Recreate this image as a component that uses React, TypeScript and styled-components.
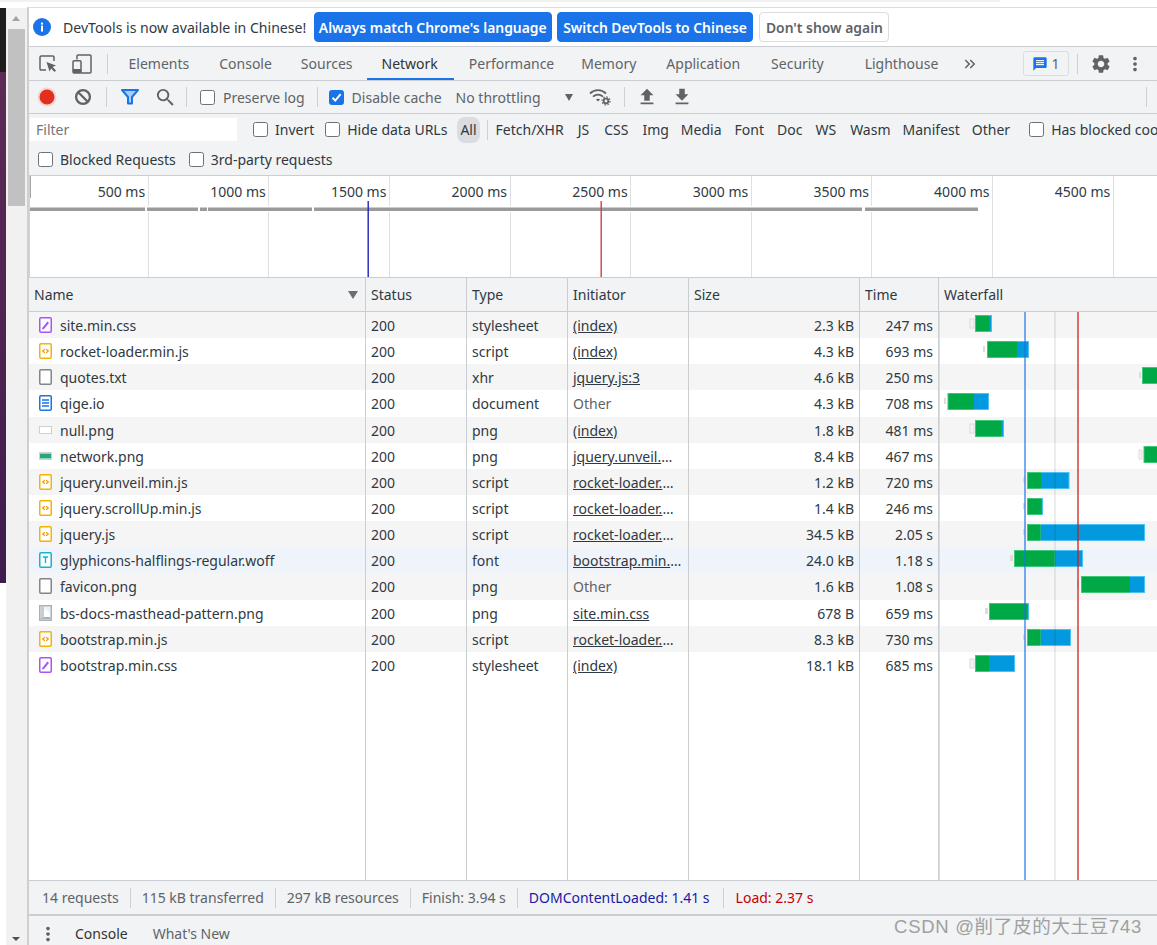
import React from "react";
import styled, { createGlobalStyle } from "styled-components";
import { MdSettings, MdMoreVert, MdSearch, MdMessage, MdFileUpload, MdFileDownload, MdKeyboardDoubleArrowRight } from "react-icons/md";

const Global = createGlobalStyle`
  html, body { margin: 0; padding: 0; background: #fff; }
  body { font-family: "Noto Sans", "Open Sans", sans-serif; font-size: 14px; color: #303942; }
  * { box-sizing: border-box; }
`;

const Page = styled.div`width: 1157px; height: 945px; overflow: hidden; display: flex; flex-direction: column; position: relative; background: #fff;`;
const TopStrip = styled.div`height: 7px; flex: none;`;
const TopHighlight = styled.div`width: 1000px; height: 2px; background: #f1f1f1; border-radius: 0 0 6px 0;`;
const Main = styled.div`flex: 1; min-height: 0; display: flex;`;
const Wallpaper = styled.div`
  width: 6px; flex: none; margin-top: 1px; height: 575px;
  background: linear-gradient(#1d1d1d 0, #1d1d1d 64px, #5e2a56 64px, #3e1c4d 100%);
`;
const ScrollBar = styled.div`
  width: 21px; flex: none; margin-top: 1px; background: #f1f1f1; display: flex; flex-direction: column; align-items: center; padding-top: 21px; position: relative;
`;
const ScrollThumb = styled.div`width: 17px; height: 177px; background: #c1c1c1;`;
const ScrollArrow = styled.div<{ $down?: boolean }>`
  position: absolute; left: 6px; ${p => (p.$down ? "bottom: 4px;" : "top: 8px;")}
  width: 0; height: 0; border-left: 4.5px solid transparent; border-right: 4.5px solid transparent;
  ${p => (p.$down ? "border-top: 4px solid #505050;" : "border-bottom: 5px solid #a3a3a3;")}
`;
const DevTools = styled.div`flex: 1; min-width: 0; display: flex; flex-direction: column; border-left: 2px solid #cdcfd2; border-top: 1px solid #dadce0;`;

const InfoBar = styled.div`height: 39px; flex: none; display: flex; align-items: center; background: #fff; border-bottom: 1px solid #cacdd1; padding-left: 4px;`;
const InfoText = styled.span`margin: 0 7.5px 0 12px; color: #303942; font-size: 14.1px;`;
const InfoButton = styled.button<{ $plain?: boolean; $mr: number; $px: number }>`
  height: 30px; padding: 0 ${p => p.$px}px; margin-right: ${p => p.$mr}px; border-radius: 4px; font: 600 13.9px "Noto Sans", sans-serif; white-space: nowrap;
  color: ${p => (p.$plain ? "#5f6368" : "#fff")}; background: ${p => (p.$plain ? "#fff" : "#1a73e8")};
  border: 1px solid ${p => (p.$plain ? "#dadce0" : "#1a73e8")};
`;

const TabBar = styled.div`height: 34px; flex: none; display: flex; align-items: stretch; background: #f1f3f4; border-bottom: 1px solid #cacdd1; color: #5f6368; padding-left: 2px;`;
const TabIcon = styled.div`width: 34px; display: flex; align-items: center; justify-content: center;`;
const VSep = styled.div<{ $ml?: number; $mr?: number; $h?: number }>`
  width: 1px; height: ${p => p.$h ?? 20}px; align-self: center; flex: none; background: #cdcfd2;
  margin-left: ${p => p.$ml ?? 5}px; margin-right: ${p => p.$mr ?? p.$ml ?? 5}px;
`;
const Tab = styled.div<{ $active?: boolean; $extra?: number }>`
  display: flex; align-items: center; padding: 0 ${p => 14.5 + (p.$extra ?? 0)}px 0 14.5px; white-space: nowrap;
  color: ${p => (p.$active ? "#333" : "#5f6368")};
  border-bottom: 2px solid ${p => (p.$active ? "#1a73e8" : "transparent")};
  border-top: 2px solid transparent;
`;
const Spacer = styled.div`flex: 1;`;
const MessageChip = styled.div`
  align-self: center; width: 46px; height: 25px; border: 1px solid #dadce0; border-radius: 3px; display: flex; align-items: center; justify-content: center; gap: 3px; color: #5f6368; margin-right: 8px;
`;
const ToolIcon = styled.div<{ $w?: number; $ml?: number; $c?: string }>`
  width: ${p => p.$w ?? 36}px; margin-left: ${p => p.$ml ?? 0}px; flex: none; display: flex; align-items: center; justify-content: center; color: ${p => p.$c ?? "#5f6368"};
`;

const ToolBar = styled.div`height: 33px; flex: none; display: flex; align-items: center; background: #f1f3f4; border-bottom: 1px solid #cacdd1; color: #5f6368;`;
const CheckLabel = styled.label<{ $ml?: number; $dark?: boolean }>`
  display: flex; align-items: center; gap: ${p => (p.$dark ? 7 : 8)}px; margin-left: ${p => p.$ml ?? 0}px; white-space: nowrap; color: ${p => (p.$dark ? "#303942" : "#5f6368")}; flex: none;
`;
const CheckBox = styled.span<{ $on?: boolean }>`
  width: 15px; height: 15px; flex: none; border-radius: 2.5px; display: flex; align-items: center; justify-content: center;
  border: 1px solid ${p => (p.$on ? "#1a73e8" : "#6e7276")}; background: ${p => (p.$on ? "#1a73e8" : "#fff")};
`;
const Throttle = styled.span`margin-left: 14px; white-space: nowrap; width: 109px; flex: none;`;
const DropTri = styled.span`width: 0; height: 0; border-left: 4.5px solid transparent; border-right: 4.5px solid transparent; border-top: 7px solid #5f6368; flex: none;`;

const FilterPanel = styled.div`height: 62px; flex: none; background: #f1f3f4; border-bottom: 1px solid #cacdd1; display: flex; flex-direction: column;`;
const FilterRow = styled.div`height: 31px; flex: none; display: flex; align-items: center; white-space: nowrap; overflow: hidden; color: #303942;`;
const FilterRowTwo = styled(FilterRow)`height: 28px; padding-left: 9px;`;
const FilterInput = styled.div`width: 207px; height: 23px; margin-left: 1px; background: #fff; color: #757575; padding-left: 6px; line-height: 23px; flex: none;`;
const Chip = styled.span<{ $on?: boolean; $ml?: number }>`
  flex: none; margin-left: ${p => p.$ml ?? 0}px; padding: 0 ${p => (p.$on ? 3 : 0)}px; height: 26px; line-height: 26px; border-radius: 8px; background: ${p => (p.$on ? "#dadce0" : "transparent")}; color: #303942;
`;

const Overview = styled.div`height: 102px; flex: none; position: relative; background: #fff; border-bottom: 1px solid #cacdd1; border-left: 1px solid #c3d5ef; overflow: hidden;`;
const Ticks = styled.div`display: flex; height: 100%; margin-left: -1px;`;
const TickCell = styled.div<{ $w: number }>`
  width: ${p => p.$w}px; flex: none; border-right: 1px solid #dfe0e2; text-align: right; padding: 6px 2.5px 0 0; color: #303942; white-space: nowrap;
`;
const OverviewHandle = styled.div`position: absolute; left: -1px; top: 0; width: 2px; height: 22px; background: #a3a3a3;`;
const OverviewChart = styled.svg`position: absolute; left: -1px; top: 0; width: 1128px; height: 101px; display: block;`;

const colsTemplate = "337px 101px 101px 121px 171px 79px 1fr";
const HeaderRow = styled.div`height: 34px; flex: none; display: grid; grid-template-columns: ${colsTemplate}; background: #f1f3f4; border-bottom: 1px solid #cacdd1; color: #303942;`;
const HeaderCell = styled.div`display: flex; align-items: center; justify-content: space-between; padding: 0 7px 0 5px; border-right: 1px solid #cacdd1; &:last-child { border-right: 0; }`;
const SortTri = styled.span`width: 0; height: 0; border-left: 5px solid transparent; border-right: 5px solid transparent; border-top: 8px solid #6e6e6e;`;

const TableBody = styled.div`flex: 1; min-height: 0; position: relative; display: flex; flex-direction: column;`;
const Row = styled.div<{ $bg: string }>`height: 26.15px; flex: none; display: grid; grid-template-columns: ${colsTemplate}; background: ${p => p.$bg}; color: #303942;`;
const Filler = styled.div`flex: 1; display: grid; grid-template-columns: ${colsTemplate}; background: #fff;`;
const Cell = styled.div<{ $right?: boolean; $muted?: boolean; $link?: boolean }>`
  padding: 0 5px; line-height: 28px; height: 100%; border-right: 1px solid #cacdd1; white-space: nowrap; overflow: hidden; text-overflow: ellipsis; min-width: 0;
  text-align: ${p => (p.$right ? "right" : "left")}; color: ${p => (p.$muted ? "#5f6368" : "#303942")};
  text-decoration: ${p => (p.$link ? "underline" : "none")};
`;
const NameCell = styled(Cell)`display: flex; align-items: center; padding-left: 10px; gap: 8px;`;
const NameText = styled.span`padding-top: 2px; line-height: 24px;`;
const WaterCell = styled.div`position: relative; overflow: hidden; min-width: 0; box-shadow: inset 1px 0 #dcdee0;`;
const WaterSvg = styled.svg`display: block; position: absolute; left: 0; top: 0; width: 218px; height: 26px;`;
const EmptyCell = styled.div`border-right: 1px solid #cacdd1; &:last-child { border-right: 0; box-shadow: inset 1px 0 #dcdee0; }`;
const Marker = styled.div<{ $x: number; $c: string }>`position: absolute; top: 0; bottom: 0; left: ${p => p.$x}px; width: 2px; background: ${p => p.$c};`;

const StatusBar = styled.div`height: 36px; flex: none; display: flex; align-items: center; background: #f1f3f4; border-top: 1px solid #cacdd1; border-bottom: 2px solid #cacdd1; padding-left: 13px; color: #5f6368;`;
const StatusItem = styled.span<{ $c?: string }>`white-space: nowrap; color: ${p => p.$c ?? "#5f6368"};`;
const DrawerBar = styled.div`height: 29px; flex: none; display: flex; align-items: center; background: #f1f3f4; color: #5f6368; padding: 6px 0 0 8px;`;
const DrawerTab = styled.span<{ $dark?: boolean; $ml: number }>`margin-left: ${p => p.$ml}px; color: ${p => (p.$dark ? "#333" : "#5f6368")}; white-space: nowrap;`;
const Watermark = styled.div`
  position: absolute; right: 15px; bottom: 7px; font: 18.5px "Liberation Sans", "Noto Sans CJK SC", sans-serif; color: #a0a0a0; white-space: nowrap; letter-spacing: 0.7px;
`;
const IconSvg = styled.svg`flex: none;`;

type Kind = "css" | "js" | "plain" | "doc" | "blank" | "green" | "font" | "image";

const FileIcon = ({ kind }: { kind: Kind }) => {
  const frame = (c: string) => <rect x="0.75" y="0.75" width="11.5" height="14.5" rx="1.2" fill="#fff" stroke={c} strokeWidth="1.5" />;
  return (
    <IconSvg width="13" height="16" viewBox="0 0 13 16">
      {kind === "css" && (<>{frame("#a855f7")}<path d="M3 12.5 L3.4 10.7 L8.4 4.6 L10 5.9 L5 12 Z" fill="#a855f7" /></>)}
      {kind === "js" && (<>{frame("#f4b400")}<path d="M5.8 6.3 L3.7 8 L5.8 9.7 M7.2 6.3 L9.3 8 L7.2 9.7" fill="none" stroke="#ee9b00" strokeWidth="1.2" /></>)}
      {kind === "plain" && frame("#80868b")}
      {kind === "doc" && (<>{frame("#1a73e8")}<path d="M3 5 H10 M3 8 H10 M3 11 H10" stroke="#1a73e8" strokeWidth="1.3" /></>)}
      {kind === "blank" && <rect x="0.5" y="4.5" width="12" height="7" fill="#fff" stroke="#cfcfcf" />}
      {kind === "green" && (<><rect x="0.5" y="4.5" width="12" height="7" fill="#fff" stroke="#cfd2d4" /><rect x="1" y="5.5" width="11" height="5" fill="#27a57e" /></>)}
      {kind === "font" && (<>{frame("#12b5cb")}<path d="M4 5 H9 M6.5 5 V11" stroke="#12b5cb" strokeWidth="1.4" fill="none" /></>)}
      {kind === "image" && (<>
        <rect x="0.75" y="0.75" width="11.5" height="14.5" fill="#eef2f7" stroke="#aab1ba" strokeWidth="1.5" />
        <path d="M2 8 L6.5 4.5 L11 8 V13 H2 Z" fill="#fff" /><rect x="2" y="12" width="9" height="2" fill="#9fb9a8" /><rect x="2" y="2" width="3" height="11" fill="#c4ccd6" />
      </>)}
    </IconSvg>
  );
};

const InfoIcon = () => (
  <IconSvg width="18" height="18" viewBox="0 0 18 18">
    <circle cx="9" cy="9" r="9" fill="#1a73e8" />
    <rect x="8" y="7.6" width="2" height="6" fill="#fff" /><rect x="8" y="4.6" width="2" height="2" fill="#fff" />
  </IconSvg>
);
const InspectIcon = () => (
  <svg width="18" height="18" viewBox="0 0 18 18">
    <path d="M7 15 H2.2 A1.2 1.2 0 0 1 1 13.8 V2.2 A1.2 1.2 0 0 1 2.2 1 H13.8 A1.2 1.2 0 0 1 15 2.2 V6" fill="none" stroke="#5f6368" strokeWidth="1.5" />
    <path d="M7.5 7 L17 10.6 L13.6 12 L17 15.6 L15.5 17 L12.2 13.4 L10.5 16.5 Z" fill="#5f6368" />
  </svg>
);
const DeviceIcon = () => (
  <svg width="20" height="20" viewBox="0 0 20 20">
    <path d="M5 5.5 V2 A1 1 0 0 1 6 1 H18 A1 1 0 0 1 19 2 V18 A1 1 0 0 1 18 19 H9" fill="none" stroke="#5f6368" strokeWidth="1.5" />
    <rect x="1" y="6.7" width="8" height="12.3" rx="1" fill="none" stroke="#5f6368" strokeWidth="1.5" />
    <rect x="1" y="15" width="8" height="4" fill="#5f6368" />
  </svg>
);
const RecordIcon = () => (
  <svg width="20" height="20" viewBox="0 0 20 20">
    <circle cx="10" cy="10" r="9.5" fill="#f6d5d3" /><circle cx="10" cy="10" r="7.5" fill="#e1301f" />
  </svg>
);
const ClearIcon = () => (
  <svg width="18" height="18" viewBox="0 0 18 18">
    <circle cx="9" cy="9" r="6.9" fill="none" stroke="#5f6368" strokeWidth="2.3" />
    <path d="M4.2 4.2 L13.8 13.8" stroke="#5f6368" strokeWidth="2.3" />
  </svg>
);
const FunnelIcon = () => (
  <svg width="20" height="18" viewBox="0 0 20 18">
    <path d="M2 2 H18 L12 9 V15.5 H8 V9 Z" fill="#a9cdf7" stroke="#1a73e8" strokeWidth="2" strokeLinejoin="round" />
  </svg>
);
const CheckMark = () => (
  <svg width="13" height="13" viewBox="0 0 13 13"><path d="M2.5 6.8 L5.3 9.6 L10.6 3.2" fill="none" stroke="#fff" strokeWidth="2" /></svg>
);
const WifiGear = () => (
  <svg width="22" height="18" viewBox="0 0 22 18">
    <path d="M1 5.5 C5.5 1 12.5 1 17 5.5" fill="none" stroke="#5f6368" strokeWidth="1.8" />
    <path d="M4 8.7 C7 6 11 6 14 8.7" fill="none" stroke="#5f6368" strokeWidth="1.8" />
    <path d="M7 11.5 L9 13.5 L11 11.5 C10 10.4 8 10.4 7 11.5 Z" fill="#5f6368" />
    <circle cx="17" cy="13" r="2.3" fill="none" stroke="#5f6368" strokeWidth="1.8" />
    <circle cx="17" cy="13" r="4" fill="none" stroke="#5f6368" strokeWidth="1.3" strokeDasharray="1.5 1.6" />
  </svg>
);

const Check = ({ on, children, ml, dark }: { on?: boolean; children: React.ReactNode; ml?: number; dark?: boolean }) => (
  <CheckLabel $ml={ml} $dark={dark}>
    <CheckBox $on={on}>{on && <CheckMark />}</CheckBox>
    <span>{children}</span>
  </CheckLabel>
);

type Req = {
  name: string; kind: Kind; type: string; init: string; link: boolean; size: string; time: string;
  tick: [number, number, boolean?]; green: [number, number]; blue?: number; bg?: string;
};
// bar coordinates are page x positions, converted to waterfall-cell coordinates when drawn
const requests: Req[] = [
  { name: "site.min.css", kind: "css", type: "stylesheet", init: "(index)", link: true, size: "2.3 kB", time: "247 ms", tick: [970, 974, true], green: [975, 989], blue: 992 },
  { name: "rocket-loader.min.js", kind: "js", type: "script", init: "(index)", link: true, size: "4.3 kB", time: "693 ms", tick: [983, 985], green: [987, 1017], blue: 1029 },
  { name: "quotes.txt", kind: "plain", type: "xhr", init: "jquery.js:3", link: true, size: "4.6 kB", time: "250 ms", tick: [1139, 1141], green: [1142, 1157] },
  { name: "qige.io", kind: "doc", type: "document", init: "Other", link: false, size: "4.3 kB", time: "708 ms", tick: [944, 946], green: [947.5, 974], blue: 989 },
  { name: "null.png", kind: "blank", type: "png", init: "(index)", link: true, size: "1.8 kB", time: "481 ms", tick: [970, 974, true], green: [975, 1001], blue: 1004 },
  { name: "network.png", kind: "green", type: "png", init: "jquery.unveil.min.js", link: true, size: "8.4 kB", time: "467 ms", tick: [1139, 1142, true], green: [1143.5, 1157] },
  { name: "jquery.unveil.min.js", kind: "js", type: "script", init: "rocket-loader.min.js:1", link: true, size: "1.2 kB", time: "720 ms", tick: [1023, 1025], green: [1027, 1041], blue: 1069.5 },
  { name: "jquery.scrollUp.min.js", kind: "js", type: "script", init: "rocket-loader.min.js:1", link: true, size: "1.4 kB", time: "246 ms", tick: [1023, 1025], green: [1027, 1041], blue: 1043 },
  { name: "jquery.js", kind: "js", type: "script", init: "rocket-loader.min.js:1", link: true, size: "34.5 kB", time: "2.05 s", tick: [1023, 1025], green: [1027, 1040.5], blue: 1145 },
  { name: "glyphicons-halflings-regular.woff", kind: "font", type: "font", init: "bootstrap.min.css", link: true, size: "24.0 kB", time: "1.18 s", tick: [1010, 1013], green: [1014, 1054.5], blue: 1083, bg: "#eff4fb" },
  { name: "favicon.png", kind: "plain", type: "png", init: "Other", link: false, size: "1.6 kB", time: "1.08 s", tick: [1077, 1079], green: [1081, 1130], blue: 1145 },
  { name: "bs-docs-masthead-pattern.png", kind: "image", type: "png", init: "site.min.css", link: true, size: "678 B", time: "659 ms", tick: [985, 988], green: [989, 1027], blue: 1029 },
  { name: "bootstrap.min.js", kind: "js", type: "script", init: "rocket-loader.min.js:1", link: true, size: "8.3 kB", time: "730 ms", tick: [1023, 1025], green: [1027, 1040.5], blue: 1071 },
  { name: "bootstrap.min.css", kind: "css", type: "stylesheet", init: "(index)", link: true, size: "18.1 kB", time: "685 ms", tick: [970, 974, true], green: [975, 989], blue: 1015 },
];

const WATER_X = 939;
const Bars = ({ r }: { r: Req }) => {
  const [t0, t1, boxed] = r.tick;
  const g0 = r.green[0] - WATER_X, g1 = r.green[1] - WATER_X;
  const b1 = r.blue !== undefined ? r.blue - WATER_X : g1;
  return (
    <WaterSvg viewBox="0 0 218 26">
      <rect x={t0 - WATER_X} y={boxed ? 7 : 8} width={t1 - t0} height={boxed ? 9 : 6} fill={boxed ? "#f3f3f3" : "#dcdcdc"} stroke={boxed ? "#dcdcdc" : "none"} />
      {r.blue !== undefined && <rect x={g1} y="3" width={b1 - g1} height="17" fill="#4cc1f3" />}
      {r.blue !== undefined && <rect x={g1} y="4" width={b1 - g1 - 1} height="15" fill="#0299de" />}
      <rect x={g0} y="3" width={g1 - g0} height="17" fill="#3dc777" />
      <rect x={g0 + 1} y="4" width={g1 - g0 - 1} height="15" fill="#00a846" />
    </WaterSvg>
  );
};

const tabs: [string, number?][] = [["Elements", 1], ["Console"], ["Sources"], ["Network", 2], ["Performance", -2], ["Memory", 1], ["Application", 2], ["Security", 12], ["Lighthouse"]];
const chips: [string, number][] = [["Fetch/XHR", 1], ["JS", 14], ["CSS", 15], ["Img", 14], ["Media", 12], ["Font", 13], ["Doc", 13], ["WS", 13], ["Wasm", 14], ["Manifest", 12], ["Other", 12]];
const tickLabels = ["500 ms", "1000 ms", "1500 ms", "2000 ms", "2500 ms", "3000 ms", "3500 ms", "4000 ms", "4500 ms"];
const overviewSegments: [number, number][] = [[29, 145], [147, 198], [200, 207], [208, 312], [314, 862], [865, 978]];

export default function App() {
  return (
    <Page>
      <Global />
      <TopStrip><TopHighlight /></TopStrip>
      <Main>
        <Wallpaper />
        <ScrollBar>
          <ScrollArrow />
          <ScrollThumb />
          <ScrollArrow $down />
        </ScrollBar>
        <DevTools>
          <InfoBar>
            <InfoIcon />
            <InfoText>DevTools is now available in Chinese!</InfoText>
            <InfoButton $mr={5} $px={4}>Always match Chrome's language</InfoButton>
            <InfoButton $mr={6} $px={5.5}>Switch DevTools to Chinese</InfoButton>
            <InfoButton $mr={0} $px={5.5} $plain>Don't show again</InfoButton>
          </InfoBar>

          <TabBar>
            <TabIcon><InspectIcon /></TabIcon>
            <TabIcon><DeviceIcon /></TabIcon>
            <VSep $ml={8} $mr={6} />
            {tabs.map(([t, extra]) => <Tab key={t} $active={t === "Network"} $extra={extra}>{t}</Tab>)}
            <ToolIcon $w={20} $ml={7}><MdKeyboardDoubleArrowRight size={18} /></ToolIcon>
            <Spacer />
            <MessageChip><MdMessage size={16} color="#1a73e8" />1</MessageChip>
            <VSep $ml={0} />
            <ToolIcon $w={45}><MdSettings size={22} /></ToolIcon>
            <ToolIcon $w={24}><MdMoreVert size={22} /></ToolIcon>
            <ToolIcon $w={10} />
          </TabBar>

          <ToolBar>
            <ToolIcon><RecordIcon /></ToolIcon>
            <ToolIcon><ClearIcon /></ToolIcon>
            <VSep />
            <ToolIcon><FunnelIcon /></ToolIcon>
            <ToolIcon $w={35}><MdSearch size={23} /></ToolIcon>
            <VSep $ml={3} $mr={3} />
            <Check ml={10}>Preserve log</Check>
            <VSep $ml={12} $mr={11} />
            <Check on>Disable cache</Check>
            <Throttle>No throttling</Throttle>
            <DropTri />
            <ToolIcon $w={32} $ml={11}><WifiGear /></ToolIcon>
            <VSep $ml={8} />
            <ToolIcon $w={26} $ml={1}><MdFileUpload size={22} /></ToolIcon>
            <ToolIcon $w={44}><MdFileDownload size={22} /></ToolIcon>
            <Spacer />
            <VSep $ml={10} />
          </ToolBar>

          <FilterPanel>
            <FilterRow>
              <FilterInput>Filter</FilterInput>
              <Check ml={16} dark>Invert</Check>
              <Check ml={11} dark>Hide data URLs</Check>
              <Chip $on $ml={10}>All</Chip>
              <VSep $ml={7} />
              {chips.map(([c, ml]) => <Chip key={c} $ml={ml}>{c}</Chip>)}
              <Check ml={19} dark>Has blocked cookies</Check>
            </FilterRow>
            <FilterRowTwo>
              <Check dark>Blocked Requests</Check>
              <Check ml={13} dark>3rd-party requests</Check>
            </FilterRowTwo>
          </FilterPanel>

          <Overview>
            <Ticks>
              {tickLabels.map((t, i) => <TickCell key={t} $w={i === 0 ? 119.6 : 120.65}>{t}</TickCell>)}
            </Ticks>
            <OverviewHandle />
            <OverviewChart viewBox="29 176 1128 101">
              {overviewSegments.map(([a, b]) => (
                <g key={a}>
                  <rect x={a - 1} y="206" width={b - a + 2} height="6" fill="#fff" />
                  <rect x={a} y="207.5" width={b - a} height="3.5" fill="#9a9a9a" />
                </g>
              ))}
              <rect x="367.5" y="201" width="1.4" height="76" fill="#2222b8" />
              <rect x="600.5" y="201" width="1.4" height="76" fill="#d33f3f" />
            </OverviewChart>
          </Overview>

          <HeaderRow>
            <HeaderCell>Name<SortTri /></HeaderCell>
            <HeaderCell>Status</HeaderCell>
            <HeaderCell>Type</HeaderCell>
            <HeaderCell>Initiator</HeaderCell>
            <HeaderCell>Size</HeaderCell>
            <HeaderCell>Time</HeaderCell>
            <HeaderCell>Waterfall</HeaderCell>
          </HeaderRow>

          <TableBody>
            {requests.map((r, i) => (
              <Row key={r.name} $bg={r.bg ?? (i % 2 === 0 ? "#f5f5f5" : "#fff")}>
                <NameCell><FileIcon kind={r.kind} /><NameText>{r.name}</NameText></NameCell>
                <Cell>200</Cell>
                <Cell>{r.type}</Cell>
                <Cell $link={r.link} $muted={!r.link}>{r.init}</Cell>
                <Cell $right>{r.size}</Cell>
                <Cell $right>{r.time}</Cell>
                <WaterCell><Bars r={r} /></WaterCell>
              </Row>
            ))}
            <Filler>
              {Array.from({ length: 7 }).map((_, i) => <EmptyCell key={i} />)}
            </Filler>
            <Marker $x={994.7} $c="rgba(26,115,232,0.6)" />
            <Marker $x={1025} $c="rgba(0,0,0,0.07)" />
            <Marker $x={1048} $c="rgba(205,30,30,0.65)" />
          </TableBody>

          <StatusBar>
            <StatusItem>14 requests</StatusItem><VSep $ml={11} />
            <StatusItem>115 kB transferred</StatusItem><VSep $ml={11} />
            <StatusItem>297 kB resources</StatusItem><VSep $ml={11} />
            <StatusItem>Finish: 3.94 s</StatusItem><VSep $ml={11} />
            <StatusItem $c="#1a1aa6">DOMContentLoaded: 1.41 s</StatusItem><VSep $ml={13} $mr={12} />
            <StatusItem $c="#c80000">Load: 2.37 s</StatusItem>
          </StatusBar>

          <DrawerBar>
            <MdMoreVert size={22} />
            <DrawerTab $dark $ml={16}>Console</DrawerTab>
            <DrawerTab $ml={25}>What's New</DrawerTab>
          </DrawerBar>
        </DevTools>
      </Main>
      <Watermark>CSDN @削了皮的大土豆743</Watermark>
    </Page>
  );
}
